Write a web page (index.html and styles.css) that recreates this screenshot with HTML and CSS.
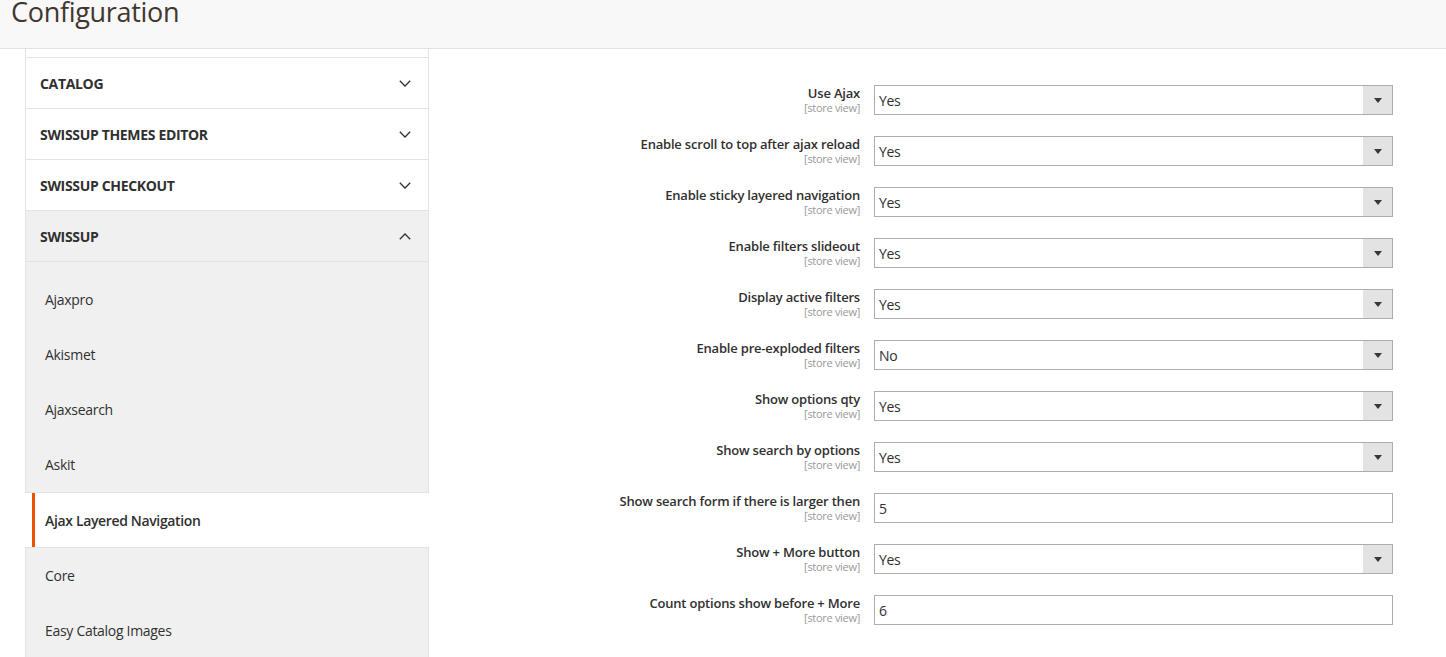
FILE: index.html
```html
<!DOCTYPE html>
<html lang="en">
<head>
<meta charset="utf-8">
<title>Configuration</title>
<link rel="stylesheet" href="styles.css">
</head>
<body>
<header class="page-header">
  <h1 class="page-title">Configuration</h1>
</header>
<div class="layout">
  <nav class="sidebar">
    <div class="sec sec-partial"></div>
    <div class="sec"><span class="sec-title">CATALOG</span><svg class="chev" width="12" height="7" viewBox="0 0 12 7"><path d="M0.8 0.8 L6 6 L11.2 0.8" fill="none" stroke="#303030" stroke-width="1.3"/></svg></div>
    <div class="sec"><span class="sec-title">SWISSUP THEMES EDITOR</span><svg class="chev" width="12" height="7" viewBox="0 0 12 7"><path d="M0.8 0.8 L6 6 L11.2 0.8" fill="none" stroke="#303030" stroke-width="1.3"/></svg></div>
    <div class="sec"><span class="sec-title">SWISSUP CHECKOUT</span><svg class="chev" width="12" height="7" viewBox="0 0 12 7"><path d="M0.8 0.8 L6 6 L11.2 0.8" fill="none" stroke="#303030" stroke-width="1.3"/></svg></div>
    <div class="sec sec-open"><span class="sec-title">SWISSUP</span><svg class="chev" width="12" height="7" viewBox="0 0 12 7"><path d="M0.8 6.2 L6 1 L11.2 6.2" fill="none" stroke="#303030" stroke-width="1.3"/></svg></div>
    <ul class="subs">
      <li class="sub">Ajaxpro</li>
      <li class="sub">Akismet</li>
      <li class="sub">Ajaxsearch</li>
      <li class="sub">Askit</li>
      <li class="sub sub-active">Ajax Layered Navigation</li>
      <li class="sub">Core</li>
      <li class="sub">Easy Catalog Images</li>
    </ul>
  </nav>
  <main class="main">
    <div class="form">
      <div class="label"><span class="label-text">Use Ajax</span><span class="scope">[store view]</span></div>
      <div class="select"><span class="value">Yes</span><span class="arrow"><i class="tri"></i></span></div>

      <div class="label"><span class="label-text">Enable scroll to top after ajax reload</span><span class="scope">[store view]</span></div>
      <div class="select"><span class="value">Yes</span><span class="arrow"><i class="tri"></i></span></div>

      <div class="label"><span class="label-text">Enable sticky layered navigation</span><span class="scope">[store view]</span></div>
      <div class="select"><span class="value">Yes</span><span class="arrow"><i class="tri"></i></span></div>

      <div class="label"><span class="label-text">Enable filters slideout</span><span class="scope">[store view]</span></div>
      <div class="select"><span class="value">Yes</span><span class="arrow"><i class="tri"></i></span></div>

      <div class="label"><span class="label-text">Display active filters</span><span class="scope">[store view]</span></div>
      <div class="select"><span class="value">Yes</span><span class="arrow"><i class="tri"></i></span></div>

      <div class="label"><span class="label-text">Enable pre-exploded filters</span><span class="scope">[store view]</span></div>
      <div class="select"><span class="value">No</span><span class="arrow"><i class="tri"></i></span></div>

      <div class="label"><span class="label-text">Show options qty</span><span class="scope">[store view]</span></div>
      <div class="select"><span class="value">Yes</span><span class="arrow"><i class="tri"></i></span></div>

      <div class="label"><span class="label-text">Show search by options</span><span class="scope">[store view]</span></div>
      <div class="select"><span class="value">Yes</span><span class="arrow"><i class="tri"></i></span></div>

      <div class="label"><span class="label-text">Show search form if there is larger then</span><span class="scope">[store view]</span></div>
      <div class="input"><span class="value">5</span></div>

      <div class="label"><span class="label-text">Show + More button</span><span class="scope">[store view]</span></div>
      <div class="select"><span class="value">Yes</span><span class="arrow"><i class="tri"></i></span></div>

      <div class="label"><span class="label-text">Count options show before + More</span><span class="scope">[store view]</span></div>
      <div class="input"><span class="value">6</span></div>
    </div>
  </main>
</div>
</body>
</html>
```

FILE: styles.css
```css
html, body {
  margin: 0;
  padding: 0;
  height: 657px;
  overflow: hidden;
  background: #ffffff;
  font-family: "Open Sans", "Liberation Sans", sans-serif;
  color: #303030;
}

.page-header {
  height: 48px;
  background: #f8f8f8;
  border-bottom: 1px solid #e3e3e3;
  padding-left: 11px;
  overflow: hidden;
}

.page-title {
  margin: -4px 0 0;
  font-size: 27px;
  line-height: 32px;
  font-weight: 400;
  letter-spacing: -0.3px;
  color: #41362f;
}

.layout {
  display: flex;
  align-items: flex-start;
}

.sidebar {
  box-sizing: border-box;
  width: 404px;
  margin-left: 25px;
  flex: none;
  border-left: 1px solid #e3e3e3;
  border-right: 1px solid #e3e3e3;
}

.sec {
  box-sizing: border-box;
  height: 51px;
  border-bottom: 1px solid #e3e3e3;
  display: flex;
  align-items: center;
  justify-content: space-between;
  padding: 0 17px 0 14px;
  background: #ffffff;
}

.sec-partial {
  height: 9px;
}

.sec-open {
  background: #f0f0f0;
}

.sec-title {
  font-size: 14px;
  font-weight: 700;
  letter-spacing: -0.33px;
  color: #303030;
}

.chev {
  display: block;
}

.subs {
  list-style: none;
  margin: 0;
  padding: 10px 0 0;
  background: #f0f0f0;
}

.sub {
  height: 55px;
  display: flex;
  align-items: center;
  padding-left: 19px;
  font-size: 14px;
  letter-spacing: -0.3px;
  color: #303030;
}

.sub-active {
  box-sizing: border-box;
  height: 56px;
  margin: 0 -1px;
  padding-left: 20px;
  border-top: 1px solid #e3e3e3;
  border-bottom: 1px solid #e3e3e3;
  background: linear-gradient(to right, #ffffff 7px, #eb5202 7px, #eb5202 10px, #ffffff 10px);
  font-weight: 600;
  letter-spacing: -0.35px;
}

.main {
  flex: 1;
  padding: 36px 53px 0 0;
}

.form {
  display: grid;
  grid-template-columns: 1fr 519px;
  column-gap: 14px;
  row-gap: 21px;
  align-items: start;
}

.label {
  display: flex;
  flex-direction: column;
  align-items: flex-end;
  text-align: right;
}

.label-text {
  font-size: 13px;
  line-height: 16px;
  font-weight: 600;
  letter-spacing: -0.2px;
  color: #303030;
}

.scope {
  font-size: 11px;
  line-height: 14px;
  letter-spacing: -0.3px;
  color: #999999;
}

.select,
.input {
  box-sizing: border-box;
  height: 30px;
  border: 1px solid #adadad;
  display: flex;
  align-items: stretch;
  background: #ffffff;
}

.value {
  flex: 1;
  display: flex;
  align-items: center;
  padding-left: 4px;
  font-size: 14px;
  letter-spacing: -0.3px;
  color: #303030;
}

.arrow {
  width: 29px;
  background: #e3e3e3;
  display: flex;
  align-items: center;
  justify-content: center;
}

.tri {
  display: block;
  width: 0;
  height: 0;
  border-left: 4px solid transparent;
  border-right: 4px solid transparent;
  border-top: 5px solid #41362f;
}
```
